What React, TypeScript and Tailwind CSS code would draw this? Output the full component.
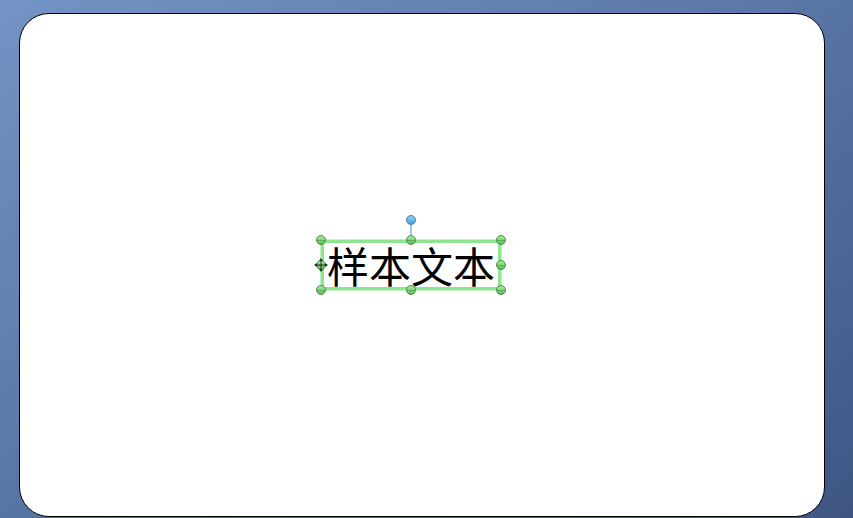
export default function App() {
  const handles = [
    "left-[-8px] top-[-8px]",
    "left-[82px] top-[-8px]",
    "right-[-8px] top-[-8px]",
    "right-[-8px] top-[17px]",
    "left-[-8px] bottom-[-8px]",
    "left-[82px] bottom-[-8px]",
    "right-[-8px] bottom-[-8px]",
    "left-[-8px] top-[17px]",
  ]

  return (
    <div className="w-[853px] h-[518px] overflow-hidden bg-gradient-to-br from-[#7394c4] to-[#3f5685] pt-[13px] pl-[19px]">
      <div className="w-[806px] h-[504px] rounded-[30px] border border-black bg-white flex items-center justify-center pr-[22px]">
        {/* selected text box */}
        <div className="relative w-[180px] h-[50px] flex items-center justify-center border-[3px] border-[#8fe48f] shadow-[0_0_0_1px_#c4f4c4]">
          <span
            className="text-[42px] leading-[48px] font-normal text-black whitespace-nowrap"
            style={{ fontFamily: '"Noto Sans CJK SC", serif' }}
          >
            样本文本
          </span>

          {/* rotation handle */}
          <div className="absolute left-[86px] top-[-19px] w-[2px] h-[16px] bg-[#9cc8ec]" />
          <div className="absolute left-[82px] top-[-28px] w-[10px] h-[10px] rounded-full border border-[#557a94] bg-gradient-to-b from-[#8fd2f5] to-[#3aa6e4]" />

          {handles.map((h, i) => (
            <div
              key={i}
              className={`absolute ${h} w-[10px] h-[10px] rounded-full border border-[#4f8a4f] bg-gradient-to-b from-[#a6ec9a] to-[#4fc44f] flex items-center`}
            >
              <div className="w-full h-px bg-[#4f8a4f]/60" />
            </div>
          ))}

          {/* move cursor on left handle */}
          <svg className="absolute left-[-11px] top-[14px]" width="16" height="16" viewBox="0 0 16 16">
            <path d="M8 2 L8 14 M2 8 L14 8" stroke="#2b2b2b" strokeWidth="1" />
            <path d="M8 1 L6 4 L10 4 Z M8 15 L6 12 L10 12 Z M1 8 L4 6 L4 10 Z M15 8 L12 6 L12 10 Z" fill="#2b2b2b" />
          </svg>
        </div>
      </div>
    </div>
  )
}
